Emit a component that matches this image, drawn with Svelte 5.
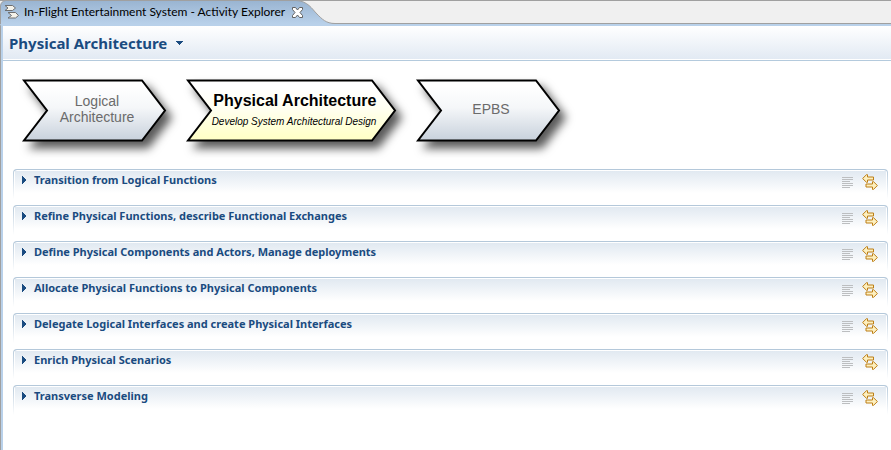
<script>
  const phases = [
    { lines: ['Logical', 'Architecture'], width: 144 },
    { lines: ['Physical Architecture'], note: 'Develop System Architectural Design', width: 210, current: true },
    { lines: ['EPBS'], width: 144 },
  ];

  const activities = [
    'Transition from Logical Functions',
    'Refine Physical Functions, describe Functional Exchanges',
    'Define Physical Components and Actors, Manage deployments',
    'Allocate Physical Functions to Physical Components',
    'Delegate Logical Interfaces and create Physical Interfaces',
    'Enrich Physical Scenarios',
    'Transverse Modeling',
  ];

  let open = $state(activities.map(() => false));
</script>

<div class="view">
  <div class="tabs">
    <svg class="tab-shape" width="340" height="24" viewBox="0 0 340 24" aria-hidden="true">
      <defs>
        <linearGradient id="tab-fill" x1="0" y1="0" x2="0" y2="1">
          <stop offset="0" stop-color="#99b4d1" />
          <stop offset="1" stop-color="#b9d1ea" />
        </linearGradient>
      </defs>
      <path d="M0 24V6Q1 1 6 .5H296C308 1 312 9 317 14S326 23.5 335 23.5V24Z" fill="url(#tab-fill)" />
      <path d="M.5 24V6Q1 1 6 .5H296C308 1 312 9 317 14S326 23.5 335 23.5H340" fill="none" stroke="#a0a0a0" />
    </svg>
    <div class="tab">
      <svg width="16" height="16" viewBox="0 0 16 16" stroke="#6f6f6f" fill="#f4f2ea" aria-hidden="true">
        <path d="M1 1.500H8.500L11.500 4 8.500 6.500H1L4 4Z" />
        <path d="M4 8.500H11.500L14.500 11.500 11.500 14H4L7.500 11.500Z" />
      </svg>
      <span>In-Flight Entertainment System - Activity Explorer</span>
      <button class="close" aria-label="Close tab">
        <svg width="11" height="11" viewBox="0 0 11 11" fill="#fff" stroke="#626262">
          <path d="M.5.5H3.500L5.500 3 7.500.5H10.500V2.500L8 5.500 10.500 8.500V10.500H7.500L5.500 8 3.500 10.500H.5V8.500L3 5.500.5 2.500Z" />
        </svg>
      </button>
    </div>
  </div>

  <main>
    <header>
      <h1>Physical Architecture</h1>
      <button class="menu" aria-label="Choose page">
        <svg width="8" height="4" viewBox="0 0 8 4" shape-rendering="crispEdges"><path d="M0 0H8L4 4Z" fill="#1a4b80" /></svg>
      </button>
    </header>

    <nav aria-label="Phases">
      {#each phases as phase, i}
        <button class="phase" class:current={phase.current} style:width="{phase.width}px">
          <svg width={phase.width} height="63" viewBox="0 0 {phase.width} 63" aria-hidden="true">
            <defs>
              <linearGradient id="phase-{i}" x1="0" y1="0" x2="0" y2="1">
                <stop offset="0.1" stop-color="#fff" />
                <stop offset="0.45" stop-color={phase.current ? '#fffff2' : '#f5f7f9'} />
                <stop offset="1" stop-color={phase.current ? '#ffffc4' : '#c8d1dc'} />
              </linearGradient>
            </defs>
            <path
              d="M2 1.500H{phase.width - 24}L{phase.width - 1} 31.500 {phase.width - 24} 61.500H2L25 31.500Z"
              fill="url(#phase-{i})"
              stroke="#000"
              stroke-width="2"
            />
          </svg>
          <span class="label">
            {#each phase.lines as line}<span>{line}</span>{/each}
            {#if phase.note}<em>{phase.note}</em>{/if}
          </span>
        </button>
      {/each}
    </nav>

    <div class="activities">
      {#each activities as activity, i}
        <section>
          <button class="toggle" aria-expanded={open[i]} onclick={() => (open[i] = !open[i])}>
            <svg width="4" height="8" viewBox="0 0 4 8" shape-rendering="crispEdges"><path d="M0 0L4 4 0 8Z" fill="#1a4b80" /></svg>
            <span>{activity}</span>
          </button>
          <button class="tool" aria-label="Description">
            <svg width="11" height="11" viewBox="0 0 11 11" shape-rendering="crispEdges">
              <path d="M0 .5H11M0 2.500H11M0 4.500H8M0 6.500H11M0 8.500H11M0 10.500H8" stroke="#bcbec0" />
            </svg>
          </button>
          <button class="tool" aria-label="Filter activities">
            <svg width="16" height="17" viewBox="0 0 16 17" fill="#fdf0c0" stroke="#bd7f16" stroke-linejoin="round">
              <path d="M.6 4.500L4.500.7H5.500V3H11.500V6H5.500V8.300H4.500Z" />
              <path d="M15.400 11.500L11.500 7.700H10.500V10H4V13H10.500V15.400H11.500Z" />
            </svg>
          </button>
        </section>
      {/each}
    </div>
  </main>
</div>

<style>
  :global(body) {
    background: #fff;
  }

  .view {
    font: 11px/16px "Noto Sans", "Open Sans", sans-serif;
    min-height: 100vh;
    display: flex;
    flex-direction: column;
  }

  button {
    font: inherit;
    color: inherit;
    background: none;
    border: 0;
    padding: 0;
    display: flex;
    cursor: pointer;
  }

  svg {
    display: block;
    flex: none;
  }

  .tabs {
    position: relative;
    height: 24px;
    box-sizing: border-box;
    background: #f0f0f0;
    border-top: 1px solid #a0a0a0;
    border-bottom: 1px solid #a0a0a0;
  }

  .tab-shape {
    position: absolute;
    top: -1px;
    left: 0;
  }

  .tab {
    position: relative;
    display: flex;
    align-items: center;
    gap: 4px;
    height: 22px;
    padding-left: 4px;
    font-family: Lato, "Noto Sans", sans-serif;
    font-size: 12px;
    color: #000;
    white-space: nowrap;
  }

  .close {
    margin-left: 3px;
  }

  main {
    flex: 1;
    border-left: 1px solid #a0a0a0;
    border-top: 2px solid #b9d1ea;
    box-shadow: inset 2px 0 #b9d1ea;
    padding-left: 2px;
  }

  header {
    display: flex;
    align-items: center;
    gap: 8px;
    height: 34px;
    padding-left: 6px;
    border-bottom: 1px solid #b4cadd;
    background: linear-gradient(#fff, #e1e9f3);
    box-shadow: inset 0 -1px #fff;
    color: #1a4b80;
  }

  h1 {
    margin: 0;
    font-size: 15px;
    line-height: 20px;
  }

  nav {
    display: flex;
    gap: 20px;
    padding: 18px 19px 0;
  }

  .phase {
    position: relative;
    height: 63px;
    align-items: center;
    justify-content: center;
    font: 14px/16px "Liberation Sans", Arial, sans-serif;
    color: #6b6b6b;
  }

  .phase > svg {
    position: absolute;
    inset: 0;
    overflow: visible;
    filter: drop-shadow(6px 7px 5px rgb(0 0 0 / 65%));
  }

  .label {
    position: relative;
    display: flex;
    flex-direction: column;
    padding: 0 0 4px 6px;
    white-space: nowrap;
  }

  .current .label {
    gap: 6px;
    padding-bottom: 0;
    font-size: 16px;
    font-weight: bold;
    color: #000;
    text-align: right;
  }

  em {
    font-size: 10px;
    font-weight: normal;
    line-height: 14px;
  }

  .activities {
    display: flex;
    flex-direction: column;
    gap: 6px;
    padding: 27px 3px 0 10px;
  }

  section {
    display: flex;
    align-items: flex-start;
    gap: 9px;
    height: 30px;
    box-sizing: border-box;
    padding: 0 9px 0 8px;
    border: 1px solid transparent;
    border-top-color: #b4c8da;
    border-bottom: 0;
    border-radius: 4px 4px 0 0;
    background:
      linear-gradient(#e1e9f1, #fff 22px) 1px 1px / calc(100% - 2px) 100% no-repeat padding-box,
      linear-gradient(#fff, #fff) padding-box,
      linear-gradient(#b4c8da, #fff) border-box;
  }

  .toggle {
    flex: 1;
    align-items: center;
    gap: 8px;
    padding-top: 2px;
    font-weight: bold;
    color: #1a4b80;
    text-align: left;
  }

  .tool {
    height: 25px;
    align-items: center;
  }
</style>
